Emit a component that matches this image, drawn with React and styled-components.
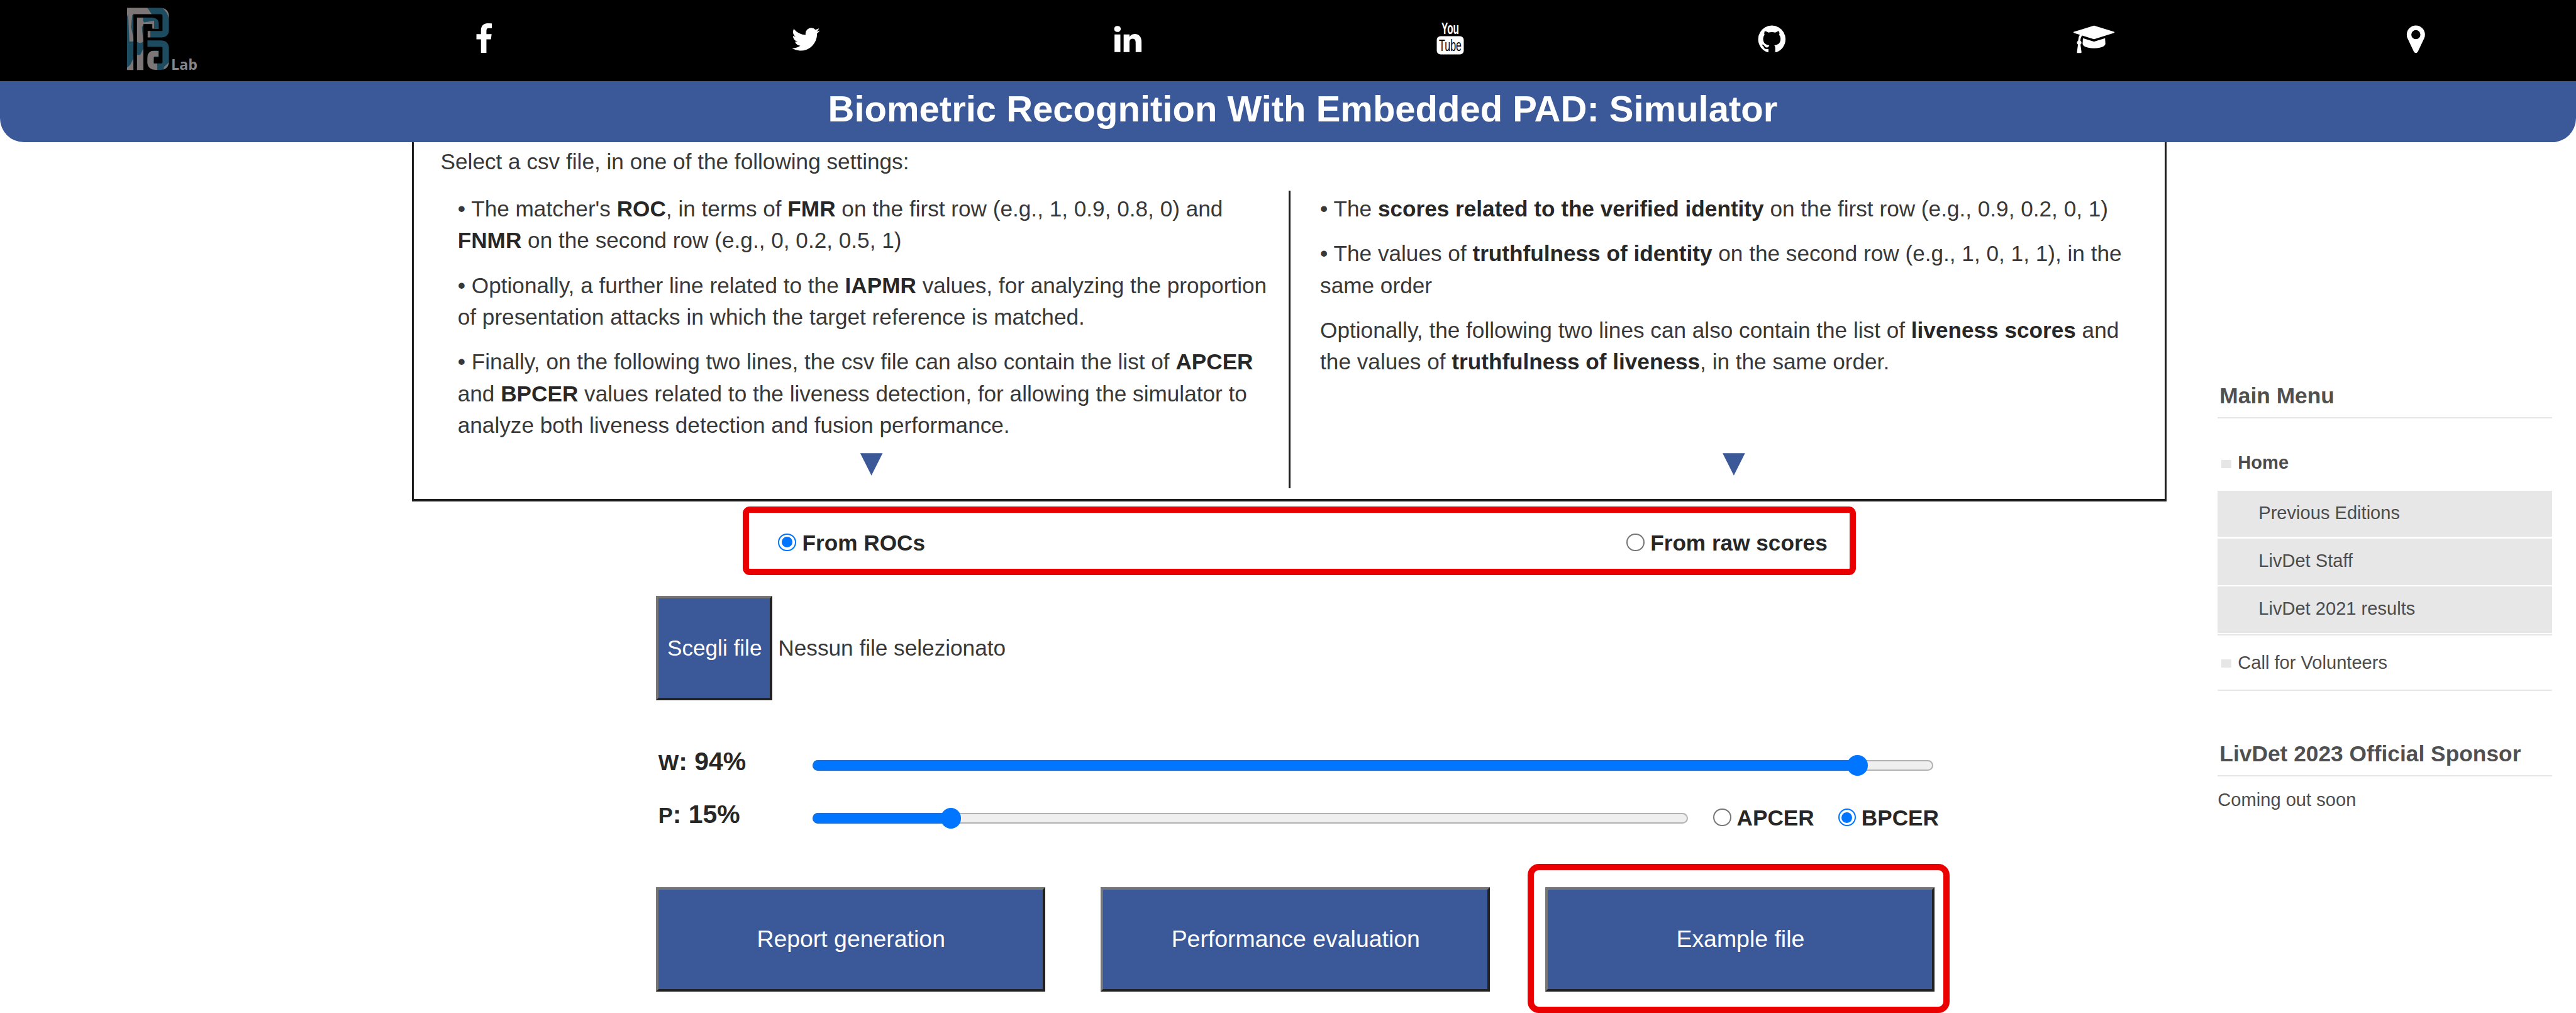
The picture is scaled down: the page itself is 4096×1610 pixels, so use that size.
import React from 'react';
import styled, { createGlobalStyle } from 'styled-components';

const SCALE = 4096 / 4103;
const px = (n) => `${(n * SCALE).toFixed(2)}px`;

const BLUE = '#3b5998';
const RED = '#ea0000';
const ACCENT = '#0075ff';

const GlobalStyle = createGlobalStyle`
  html, body { margin: 0; padding: 0; background: #fff; }
  *, *::before, *::after { box-sizing: border-box; }
  body {
    font-family: "Liberation Sans", Arial, sans-serif;
    font-size: ${px(35.25)};
    color: #383838;
    overflow: hidden;
  }
`;

const Page = styled.div`
  width: 100%;
  height: 1610px;
  overflow: hidden;
`;

/* ---------- header ---------- */

const TopBar = styled.nav`
  display: grid;
  grid-template-columns: repeat(8, 1fr);
  height: ${px(129)};
  background: #000;
`;

const TopLink = styled.a`
  display: flex;
  justify-content: center;
  align-items: flex-start;
  padding-top: ${(p) => px(p.$top)};
  padding-left: ${(p) => px(p.$left || 3.5)};
`;

const Glyph = styled.svg`
  display: block;
  height: ${px(50.8)};
  fill: #fff;
  overflow: visible;
`;

const LogoSvg = styled.svg`
  display: block;
  width: ${px(140)};
  height: ${px(129)};
`;

const Banner = styled.h1`
  margin: 0;
  height: ${px(97.3)};
  display: flex;
  align-items: center;
  justify-content: center;
  padding: 0 0 ${px(9.5)} ${px(47)};
  background: ${BLUE};
  border-radius: 0 0 ${px(38)} ${px(38)};
  color: #fff;
  font-size: ${px(58.1)};
  font-weight: bold;
  line-height: 1;
  white-space: nowrap;
`;

/* ---------- body ---------- */

const Body = styled.div`
  display: flex;
  align-items: flex-start;
`;

const Main = styled.main`
  margin-left: ${px(655.8)};
  width: ${px(2794.6)};
`;

const InfoBox = styled.section`
  height: ${px(572)};
  border: solid #1c1c1c;
  border-width: 0 ${px(3.01)} ${px(4.01)};
  padding: ${px(6.2)} 0 0 ${px(43)};
`;

const Intro = styled.p`
  margin: 0;
  line-height: ${px(50.6)};
  height: ${px(71.5)};
  white-space: nowrap;
`;

const Columns = styled.div`
  display: flex;
  height: ${px(473)};
  padding-left: ${px(27.2)};
`;

const Column = styled.div`
  display: flex;
  flex-direction: column;
  padding-top: ${px(3.3)};
  width: ${(p) => px(p.$width)};
  border-right: ${(p) => (p.$divided ? `${px(3.01)} solid #1c1c1c` : '0')};
  margin-right: ${(p) => (p.$divided ? px(47) : '0')};
`;

const Para = styled.p`
  margin: 0 0 ${px(20.8)};
  line-height: ${px(50.6)};
  white-space: nowrap;
  b { color: #272727; }
`;

const Arrow = styled.span`
  width: ${px(1318)};
  height: ${px(50)};
  margin-top: auto;
  text-align: center;
  color: ${BLUE};
  font-size: ${px(61)};
  line-height: ${px(17.4)};
`;

const SourceFrame = styled.div`
  display: flex;
  justify-content: space-between;
  align-items: center;
  margin: ${px(7.8)} 0 0 ${px(527.2)};
  width: ${px(1772.7)};
  height: ${px(110)};
  padding: ${px(7)} ${px(35)} 0 ${px(46.5)};
  border: ${px(10.02)} solid ${RED};
  border-radius: ${px(11)};
`;

const Choice = styled.label`
  display: flex;
  align-items: center;
  gap: ${px(9.7)};
  font-weight: bold;
  color: #272727;
  line-height: ${px(50)};
  white-space: nowrap;
`;

const Radio = styled.span`
  display: flex;
  align-items: center;
  justify-content: center;
  width: ${px(28.6)};
  height: ${px(28.6)};
  margin-top: ${px(-2.6)};
  border-radius: 50%;
  background: #fff;
  border: ${px(2.2)} solid ${(p) => (p.$on ? ACCENT : '#767676')};
  &::after {
    content: '';
    width: ${px(17)};
    height: ${px(17)};
    border-radius: 50%;
    background: ${(p) => (p.$on ? ACCENT : 'transparent')};
  }
`;

const Form = styled.div`
  margin-left: ${px(389.1)};
  width: ${px(2044)};
`;

const FileRow = styled.div`
  display: flex;
  align-items: center;
  gap: ${px(9.6)};
  margin-top: ${px(33)};
`;

const Button = styled.button`
  width: ${(p) => px(p.$width)};
  height: ${px(166)};
  padding: 0 0 ${px(1.5)} ${px(1.5)};
  border: ${px(4.01)} solid;
  border-color: #767676 #222 #222 #767676;
  background: ${BLUE};
  color: #fff;
  font-family: inherit;
  font-size: ${(p) => px(p.$size)};
  white-space: nowrap;
`;

const Sliders = styled.div`
  margin-top: ${px(55.1)};
`;

const SliderRow = styled.div`
  display: flex;
  align-items: center;
  height: ${px(84.3)};
  padding-left: ${px(3.6)};
`;

const SliderLabel = styled.span`
  width: ${px(246.2)};
  font-size: ${px(41)};
  font-weight: bold;
  color: #272727;
  white-space: nowrap;
  small { font-size: ${px(34.6)}; }
`;

const Track = styled.div`
  position: relative;
  width: ${(p) => px(p.$width)};
  height: ${px(17.3)};
  margin-top: ${px(12.4)};
  border: ${px(2.01)} solid #b2b2b2;
  border-radius: ${px(9)};
  background: #efefef;
`;

const Fill = styled.div`
  position: absolute;
  left: ${px(-2)};
  top: ${px(-2)};
  height: ${px(17.3)};
  width: ${(p) => px(p.$width)};
  border: solid #2b6cc4;
  border-width: ${px(1.5)} 0 ${px(1.5)} ${px(1.01)};
  border-radius: ${px(9)} 0 0 ${px(9)};
  background: ${ACCENT};
`;

const Thumb = styled.div`
  position: absolute;
  left: ${(p) => px(p.$x - 18.6)};
  top: ${px(-9.8)};
  width: ${px(33)};
  height: ${px(33)};
  border-radius: 50%;
  background: ${ACCENT};
`;

const Rates = styled.div`
  display: flex;
  margin: ${px(12)} 0 0 ${px(40.6)};
  gap: ${px(38)};
  ${Choice} { gap: ${px(8.7)}; }
`;

const Actions = styled.div`
  display: flex;
  justify-content: space-between;
  width: ${px(2036.3)};
  margin-top: ${px(73.9)};
`;

const Highlighted = styled.div`
  position: relative;
  &::after {
    content: '';
    position: absolute;
    left: ${px(-28)};
    top: ${px(-37)};
    width: ${px(672)};
    height: ${px(237)};
    border: ${px(10.02)} solid ${RED};
    border-radius: ${px(18)};
    pointer-events: none;
  }
`;

/* ---------- sidebar ---------- */

const Side = styled.aside`
  margin-left: ${px(82)};
  width: ${px(532.8)};
  padding-top: ${px(374)};
  font-size: ${px(29.15)};
  color: #4c4c4c;
`;

const SideTitle = styled.h3`
  margin: ${(p) => px(p.$top)} 0 0;
  height: ${px(66)};
  padding-left: ${px(3)};
  border-bottom: ${px(2.01)} solid #e6e6e6;
  font-size: ${px(35.4)};
  line-height: ${px(60)};
  color: #505050;
  white-space: nowrap;
`;

const MenuItem = styled.div`
  display: flex;
  align-items: center;
  height: ${(p) => px(p.$height)};
  margin: ${(p) => px(p.$top || 0)} 0 ${(p) => px(p.$bottom || 0)};
  padding-left: ${px(5.2)};
  font-weight: ${(p) => (p.$active ? 'bold' : 'normal')};
  border-bottom: ${(p) => (p.$line ? `${px(2.01)} solid #e6e6e6` : '0')};
  &::before {
    content: '';
    width: ${px(16)};
    height: ${px(13)};
    margin: ${px(3)} ${px(10.8)} 0 0;
    background: #e6e6e6;
  }
`;

const SubMenu = styled.div`
  display: flex;
  flex-direction: column;
  gap: ${px(2.8)};
  padding-bottom: ${px(2)};
  border-bottom: ${px(2.01)} solid #e6e6e6;
`;

const SubItem = styled.div`
  height: ${px(73.8)};
  padding-left: ${px(65)};
  line-height: ${px(71)};
  background: #e7e7e7;
`;

const SideText = styled.p`
  margin: 0;
  line-height: ${px(76)};
`;

/* ---------- drawings ---------- */

const ICONS = {
  facebook: 'M1343 12v264h-157q-86 0-116 36t-30 108v189h293l-39 296h-254v759H734V905H479V609h255V391q0-186 104-288.500T1115 0q147 0 228 12z',
  twitter: 'M1684 408q-67 98-162 167 1 14 1 42 0 130-38 259.500T1369.500 1125 1185 1335.500t-258 146-323 54.500q-271 0-496-145 35 4 78 4 225 0 401-138-105-2-188-64.500T285 1033q33 5 61 5 43 0 85-11-112-23-185.500-111.500T172 710v-4q68 38 146 41-66-44-105-115t-39-154q0-88 44-163 121 149 294.500 238.500T884 653q-8-38-8-74 0-134 94.500-228.500T1199 256q140 0 236 102 109-21 205-78-37 115-142 178 93-10 186-50z',
  linkedin: 'M477 625v991H147V625h330zm21-306q1 73-50.500 122T312 490h-2q-82 0-132-49t-50-122q0-74 51.500-122.500T314 148t133 48.500T498 319zm1166 729v568h-329v-530q0-105-40.500-164.500T1168 862q-63 0-105.500 34.500T999 982q-11 30-11 81v553H659q2-399 2-647t-1-296l-1-48h329v144h-2q20-32 41-56t56.500-52 87-43.500T1285 602q171 0 275 113.500t104 332.500z',
  github: 'M896 128q209 0 385.500 103T1561 510.500 1664 896q0 251-146.500 451.500T1139 1625q-27 5-40-7t-13-30q0-3 .5-76.500t.5-134.500q0-97-52-142 57-6 102.500-18t94-39 81-66.500 53-105T1386 856q0-119-79-206 37-91-8-204-28-9-81 11t-92 44l-38 24q-93-26-192-26t-192 26q-16-11-42.500-27T578 459.500 492.500 446q-44 113-7 204-79 87-79 206 0 85 20.500 150t52.500 105 80.500 67 94 39 102.500 18q-40 36-49 103-21 10-45 15t-57 5-65.500-21.500T484 1274q-19-32-48.500-52t-49.500-24l-20-3q-21 0-29 4.500t-5 11.500 9 14 13 12l7 5q22 10 43.500 38t31.500 51l10 23q13 38 44 61.500t67 30 69.500 7 55.500-3.500l23-4q0 38 .5 88.500t.5 54.500q0 18-13 30t-40 7q-232-77-378.500-277.500T128 896q0-209 103-385.500T510.500 231 896 128z',
  scholar: 'M1774 836l18 316q4 69-82 128t-235 93.500-323 34.500-323-34.500T594 1280t-82-128l18-316 574 181q22 7 48 7t48-7zm530-324q0 23-22 31l-1120 352q-4 1-10 1t-10-1L490 691q-43 34-71 111.500T386 981q63 36 63 109 0 69-58 107l58 433q2 14-8 25-9 11-24 11H225q-15 0-24-11-10-11-8-25l58-433q-58-38-58-107 0-73 65-111 11-207 98-330L22 543Q0 535 0 512t22-31l1120-352q4-1 10-1t10 1l1120 352q22 8 22 31z',
  marker: 'M1152 640q0-106-75-181t-181-75-181 75-75 181 75 181 181 75 181-75 75-181zm256 0q0 109-33 179l-364 774q-16 33-47.500 52t-67.500 19-67.500-19-46.500-52L417 819q-33-70-33-179 0-212 150-362T896 128t362 150 150 362z',
};

const Icon = ({ name, box = '0 0 1792 1792' }) => (
  <TopLink $top={36.7}>
    <Glyph viewBox={box}><path d={ICONS[name]} /></Glyph>
  </TopLink>
);

const YouTube = () => (
  <TopLink $top={36.5}>
    <Glyph viewBox="0 0 44 50.8" width="44">
      <g fontFamily="Liberation Sans Narrow, Liberation Sans, sans-serif" fontWeight="bold">
        <text x="8" y="18.500" fontSize="25.500" textLength="28" lengthAdjust="spacingAndGlyphs">You</text>
        <rect x="0.500" y="21.500" width="43" height="29" rx="6" />
        <text x="4" y="45.500" fontSize="26" fill="#000" fontWeight="normal" textLength="36" lengthAdjust="spacingAndGlyphs">Tube</text>
      </g>
    </Glyph>
  </TopLink>
);

const Logo = () => (
  <LogoSvg viewBox="0 0 420 390">
    <mask id="mono">
      <g fill="none" stroke="#fff" strokeWidth="31">
        <path d="M50 337V53H196Q221 53 221 80V145Q221 165 200 165H134" />
        <path d="M98 337V100H155Q172 100 172 116V139" />
        <path d="M133 210H198Q221 210 221 232V296Q221 321 196 321H172Q148 321 148 300V278Q148 259 166 259H187" />
      </g>
    </mask>
    <g mask="url(#mono)">
      <rect width="260" height="350" fill="#1d4b60" />
      <g fill="#7d7676">
        <path d="M62 36H132L156 72H60L54 130L70 200H46L40 70L34 80V36z" />
        <path d="M205 36H240V95L226 62z" />
        <path d="M82 84H112V100L120 112L106 130L113 200Q98 215 82 200z" />
        <path d="M112 108L165 100V136H154L150 116H112z" />
        <path d="M132 145H147V182H132z" />
        <path d="M113 235L98 264H82V340H114z" />
        <path d="M132 245H187V272H166L163 305H180V340H132z" />
        <path d="M66 280L50 312L34 326V340H66z" />
        <path d="M240 296L214 322L208 340H240z" />
      </g>
    </g>
    <text x="247" y="335" fontSize="70" fontFamily="Open Sans, sans-serif" fontWeight="700" fill="#85878a" textLength="127" lengthAdjust="spacingAndGlyphs">Lab</text>
  </LogoSvg>
);

const Slider = ({ width, at }) => (
  <Track $width={width}>
    <Fill $width={at} />
    <Thumb $x={at} />
  </Track>
);

export default function App() {
  return (
    <Page>
      <GlobalStyle />
      <TopBar>
        <TopLink $top={0} $left={7}><Logo /></TopLink>
        <Icon name="facebook" />
        <Icon name="twitter" />
        <Icon name="linkedin" />
        <YouTube />
        <Icon name="github" />
        <Icon name="scholar" box="0 0 2304 1792" />
        <Icon name="marker" />
      </TopBar>
      <Banner>Biometric Recognition With Embedded PAD: Simulator</Banner>
      <Body>
        <Main>
          <InfoBox>
            <Intro>Select a csv file, in one of the following settings:</Intro>
            <Columns>
              <Column $width={1326.7} $divided>
                <Para>
                  • The matcher's <b>ROC</b>, in terms of <b>FMR</b> on the first row (e.g., 1, 0.9, 0.8, 0) and<br />
                  <b>FNMR</b> on the second row (e.g., 0, 0.2, 0.5, 1)
                </Para>
                <Para>
                  • Optionally, a further line related to the <b>IAPMR</b> values, for analyzing the proportion<br />
                  of presentation attacks in which the target reference is matched.
                </Para>
                <Para>
                  • Finally, on the following two lines, the csv file can also contain the list of <b>APCER</b><br />
                  and <b>BPCER</b> values related to the liveness detection, for allowing the simulator to<br />
                  analyze both liveness detection and fusion performance.
                </Para>
                <Arrow>▼</Arrow>
              </Column>
              <Column $width={1320}>
                <Para>
                  • The <b>scores related to the verified identity</b> on the first row (e.g., 0.9, 0.2, 0, 1)
                </Para>
                <Para>
                  • The values of <b>truthfulness of identity</b> on the second row (e.g., 1, 0, 1, 1), in the<br />
                  same order
                </Para>
                <Para>
                  Optionally, the following two lines can also contain the list of <b>liveness scores</b> and<br />
                  the values of <b>truthfulness of liveness</b>, in the same order.
                </Para>
                <Arrow>▼</Arrow>
              </Column>
            </Columns>
          </InfoBox>
          <SourceFrame>
            <Choice><Radio $on />From ROCs</Choice>
            <Choice><Radio />From raw scores</Choice>
          </SourceFrame>
          <Form>
            <FileRow>
              <Button $width={185} $size={35.25}>Scegli file</Button>
              <span>Nessun file selezionato</span>
            </FileRow>
            <Sliders>
              <SliderRow>
                <SliderLabel><small>W</small>: 94%</SliderLabel>
                <Slider width={1784.5} at={1664.1} />
              </SliderRow>
              <SliderRow>
                <SliderLabel><small>P</small>: 15%</SliderLabel>
                <Slider width={1393.7} at={220} />
                <Rates>
                  <Choice><Radio />APCER</Choice>
                  <Choice><Radio $on />BPCER</Choice>
                </Rates>
              </SliderRow>
            </Sliders>
            <Actions>
              <Button $width={619.7} $size={37.5}>Report generation</Button>
              <Button $width={619.7} $size={37.5}>Performance evaluation</Button>
              <Highlighted><Button $width={619.7} $size={37.5}>Example file</Button></Highlighted>
            </Actions>
          </Form>
        </Main>
        <Side>
          <SideTitle $top={0}>Main Menu</SideTitle>
          <MenuItem $active $top={34} $bottom={6.6} $height={74}>Home</MenuItem>
          <SubMenu>
            <SubItem>Previous Editions</SubItem>
            <SubItem>LivDet Staff</SubItem>
            <SubItem>LivDet 2021 results</SubItem>
          </SubMenu>
          <MenuItem $line $height={88.3}>Call for Volunteers</MenuItem>
          <SideTitle $top={70}>LivDet 2023 Official Sponsor</SideTitle>
          <SideText>Coming out soon</SideText>
        </Side>
      </Body>
    </Page>
  );
}
